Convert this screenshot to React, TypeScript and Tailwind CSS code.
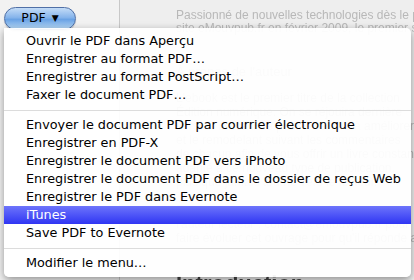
import React from "react";

const pageLines = [
  "Passionné de nouvelles technologies dès le plus jeune âge, il lance le",
  "site eMouvpub.fr en février 2009, le premier site consacré au livre",
];

const bodyLines = [
  "L'ebook est le premier titre de la collection",
  "Édition numérique. On se réjouira dernière",
  "version de ce livre pour le rendre à améliorer",
  "et le remodelant suivant les commentaires",
  "de chacun afin de vous offrir un livre constant",
  "adapté à ce nouveau type de publication,",
  "plus que jamais tourné vers le lecteur.",
  "",
  "Pour toute remarque, contactez-nous",
  "l'auteur lecteur : contact@emouvpub.fr pour",
  "faire évoluer cet ouvrage pour qu'il réponde au mieux",
];

const groups: string[][] = [
  [
    "Ouvrir le PDF dans Aperçu",
    "Enregistrer au format PDF…",
    "Enregistrer au format PostScript…",
    "Faxer le document PDF…",
  ],
  [
    "Envoyer le document PDF par courrier électronique",
    "Enregistrer en PDF-X",
    "Enregistrer le document PDF vers iPhoto",
    "Enregistrer le document PDF dans le dossier de reçus Web",
    "Enregistrer le PDF dans Evernote",
    "iTunes",
    "Save PDF to Evernote",
  ],
  ["Modifier le menu…"],
];

function MenuItem({ label }: { label: string }) {
  const active = label === "iTunes";
  return (
    <div
      className={
        active
          ? "h-[18px] pl-[22px] flex items-center text-white bg-[linear-gradient(#6d74fb,#2f35f3)]"
          : "h-[18px] pl-[22px] flex items-center text-black"
      }
    >
      {label}
    </div>
  );
}

export default function App() {
  return (
    <div className="relative w-[414px] h-[280px] overflow-hidden bg-[#eeeeee] font-['DejaVu_Sans',sans-serif]">
      {/* page behind the menu */}
      <div className="flex h-full">
        <div className="w-[120px] shrink-0 border-r border-[#c8c8c8] bg-[#f2f2f2]" />
        <div className="flex-1 min-w-0 overflow-hidden pl-[56px] text-[12px] leading-[13px] text-[#b8b8b8] whitespace-nowrap blur-[0.4px] font-['Liberation_Sans',sans-serif]">
          <div className="mt-[9px]">
            {pageLines.map((l) => (
              <div key={l}>{l}</div>
            ))}
          </div>
          <div className="mt-[30px] text-[13px]">À propos de l'auteur</div>
          <div className="mt-[14px] flex flex-col gap-[1px]">
            {bodyLines.map((l, i) => (
              <div key={i} className="h-[13px]">
                {l}
              </div>
            ))}
          </div>
          <div className="mt-[27px] text-[22px] leading-[24px] font-bold text-[#444]">Introduction</div>
        </div>
      </div>

      {/* PDF popup button */}
      <div className="absolute left-[4px] top-[7px] w-[72px] h-[23px] rounded-full border border-[#4f6fa6] bg-[linear-gradient(#c4dcf7,#86b4eb_45%,#6aa2e4_55%,#b9dcfa)] flex items-center justify-center gap-[6px] text-[12.5px] text-black shadow-[0_1px_1px_rgba(0,0,0,0.2)]">
        <span>PDF</span>
        <span className="text-[9px] leading-none">▼</span>
      </div>

      {/* dropdown menu */}
      <div className="absolute left-[4px] top-[28px] w-[407px] h-[249px] bg-white/[0.94] rounded-b-[5px] rounded-tr-[5px] shadow-[0_3px_9px_rgba(0,0,0,0.4)] pt-[4px] text-[12.8px]">
        {groups.map((g, gi) => (
          <div key={gi}>
            {gi > 0 && (
              <div className="h-[12px] flex items-center">
                <div className="h-px w-full bg-[#dcdcdc]" />
              </div>
            )}
            {g.map((label) => (
              <MenuItem key={label} label={label} />
            ))}
          </div>
        ))}
      </div>
    </div>
  );
}
